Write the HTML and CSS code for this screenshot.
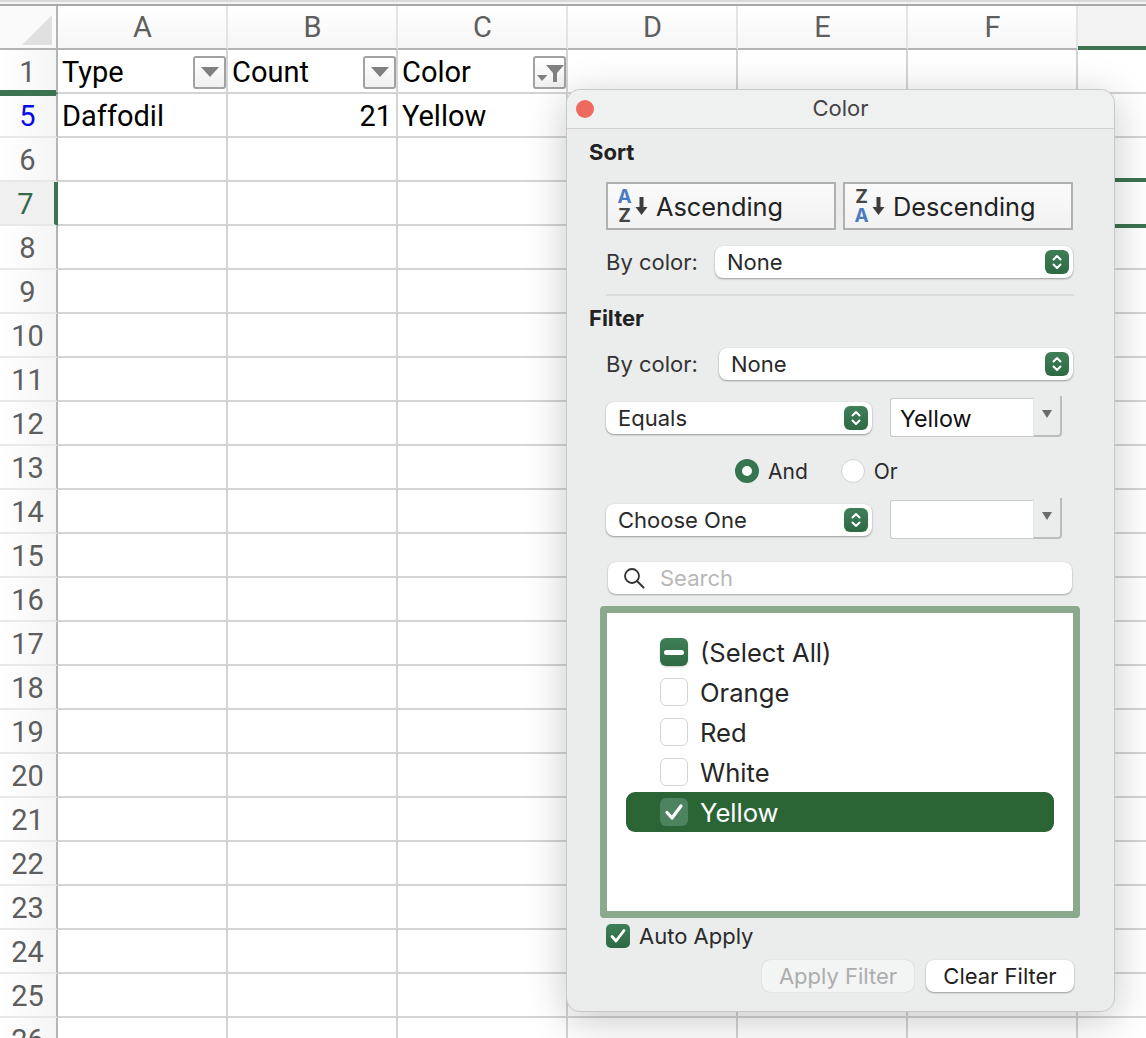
FILE: index.html
```html
<!DOCTYPE html>
<html lang="en">
<head>
<meta charset="utf-8">
<title>Color filter</title>
<link rel="stylesheet" href="styles.css">
</head>
<body>
<main class="sheet">
  <div class="topbar"></div>
  <div class="row colhead">
    <div class="rh corner"><svg width="30" height="30" viewBox="0 0 30 30"><polygon points="30,0 30,30 0,30" fill="#e0e0e0"/></svg></div>
    <div class="ch">A</div><div class="ch">B</div><div class="ch">C</div><div class="ch">D</div><div class="ch">E</div><div class="ch">F</div><div class="ch g">&nbsp;</div>
  </div>
  <div class="row">
    <div class="rh rh-first">1</div>
    <div class="c fc">Type<span class="fbtn"><svg width="18" height="10" viewBox="0 0 18 10"><polygon points="0,0 18,0 9,10" fill="#808080"/></svg></span></div>
    <div class="c fc">Count<span class="fbtn"><svg width="18" height="10" viewBox="0 0 18 10"><polygon points="0,0 18,0 9,10" fill="#808080"/></svg></span></div>
    <div class="c fc">Color<span class="fbtn"><svg width="29" height="29" viewBox="0 0 29 29"><polygon points="2,17 12.5,17 7,23" fill="#808080"/><path d="M11 7h18l-7 8v9h-4v-9z" fill="#808080"/></svg></span></div>
    <div class="c"></div><div class="c"></div><div class="c"></div><div class="c g"></div>
  </div>
  <div class="row">
    <div class="rh blue">5</div>
    <div class="c">Daffodil</div><div class="c num">21</div><div class="c">Yellow</div>
    <div class="c"></div><div class="c"></div><div class="c"></div><div class="c g"></div>
  </div>
  <div class="row"><div class="rh">6</div><div class="c"></div><div class="c"></div><div class="c"></div><div class="c"></div><div class="c"></div><div class="c"></div><div class="c g"></div></div>
  <div class="row"><div class="rh active">7</div><div class="c"></div><div class="c"></div><div class="c"></div><div class="c"></div><div class="c"></div><div class="c"></div><div class="c g selected"></div></div>
  <div class="row"><div class="rh">8</div><div class="c"></div><div class="c"></div><div class="c"></div><div class="c"></div><div class="c"></div><div class="c"></div><div class="c g"></div></div>
  <div class="row"><div class="rh">9</div><div class="c"></div><div class="c"></div><div class="c"></div><div class="c"></div><div class="c"></div><div class="c"></div><div class="c g"></div></div>
  <div class="row"><div class="rh">10</div><div class="c"></div><div class="c"></div><div class="c"></div><div class="c"></div><div class="c"></div><div class="c"></div><div class="c g"></div></div>
  <div class="row"><div class="rh">11</div><div class="c"></div><div class="c"></div><div class="c"></div><div class="c"></div><div class="c"></div><div class="c"></div><div class="c g"></div></div>
  <div class="row"><div class="rh">12</div><div class="c"></div><div class="c"></div><div class="c"></div><div class="c"></div><div class="c"></div><div class="c"></div><div class="c g"></div></div>
  <div class="row"><div class="rh">13</div><div class="c"></div><div class="c"></div><div class="c"></div><div class="c"></div><div class="c"></div><div class="c"></div><div class="c g"></div></div>
  <div class="row"><div class="rh">14</div><div class="c"></div><div class="c"></div><div class="c"></div><div class="c"></div><div class="c"></div><div class="c"></div><div class="c g"></div></div>
  <div class="row"><div class="rh">15</div><div class="c"></div><div class="c"></div><div class="c"></div><div class="c"></div><div class="c"></div><div class="c"></div><div class="c g"></div></div>
  <div class="row"><div class="rh">16</div><div class="c"></div><div class="c"></div><div class="c"></div><div class="c"></div><div class="c"></div><div class="c"></div><div class="c g"></div></div>
  <div class="row"><div class="rh">17</div><div class="c"></div><div class="c"></div><div class="c"></div><div class="c"></div><div class="c"></div><div class="c"></div><div class="c g"></div></div>
  <div class="row"><div class="rh">18</div><div class="c"></div><div class="c"></div><div class="c"></div><div class="c"></div><div class="c"></div><div class="c"></div><div class="c g"></div></div>
  <div class="row"><div class="rh">19</div><div class="c"></div><div class="c"></div><div class="c"></div><div class="c"></div><div class="c"></div><div class="c"></div><div class="c g"></div></div>
  <div class="row"><div class="rh">20</div><div class="c"></div><div class="c"></div><div class="c"></div><div class="c"></div><div class="c"></div><div class="c"></div><div class="c g"></div></div>
  <div class="row"><div class="rh">21</div><div class="c"></div><div class="c"></div><div class="c"></div><div class="c"></div><div class="c"></div><div class="c"></div><div class="c g"></div></div>
  <div class="row"><div class="rh">22</div><div class="c"></div><div class="c"></div><div class="c"></div><div class="c"></div><div class="c"></div><div class="c"></div><div class="c g"></div></div>
  <div class="row"><div class="rh">23</div><div class="c"></div><div class="c"></div><div class="c"></div><div class="c"></div><div class="c"></div><div class="c"></div><div class="c g"></div></div>
  <div class="row"><div class="rh">24</div><div class="c"></div><div class="c"></div><div class="c"></div><div class="c"></div><div class="c"></div><div class="c"></div><div class="c g"></div></div>
  <div class="row"><div class="rh">25</div><div class="c"></div><div class="c"></div><div class="c"></div><div class="c"></div><div class="c"></div><div class="c"></div><div class="c g"></div></div>
  <div class="row"><div class="rh">26</div><div class="c"></div><div class="c"></div><div class="c"></div><div class="c"></div><div class="c"></div><div class="c"></div><div class="c g"></div></div>
</main>

<section class="dialog">
  <header class="titlebar"><span class="close"></span><span class="title">Color</span></header>
  <div class="body">
    <h2 class="sect sect-sort">Sort</h2>
    <div class="sortrow">
      <button class="sortbtn"><span class="az"><b class="blue-l">A</b><b class="dark-l">Z</b></span><svg class="arrow" width="13" height="20" viewBox="0 0 12 20"><path d="M4 1h4v10h4l-6 8-6-8h4z" fill="#3c3c3c"/></svg>Ascending</button>
      <button class="sortbtn"><span class="az"><b class="dark-l">Z</b><b class="blue-l">A</b></span><svg class="arrow" width="13" height="20" viewBox="0 0 12 20"><path d="M4 1h4v10h4l-6 8-6-8h4z" fill="#3c3c3c"/></svg>Descending</button>
    </div>
    <div class="colorrow r-sortcolor">
      <span class="lbl">By color:</span>
      <div class="sel w358">None<span class="step"><svg width="12" height="18" viewBox="0 0 12 18"><path d="M2.5 6.5 6 3l3.5 3.5M2.5 11.5 6 15l3.5-3.5" fill="none" stroke="#fff" stroke-width="2" stroke-linecap="round" stroke-linejoin="round"/></svg></span></div>
    </div>
    <hr class="divider">
    <h2 class="sect sect-filter">Filter</h2>
    <div class="colorrow r-filtercolor">
      <span class="lbl">By color:</span>
      <div class="sel w354">None<span class="step"><svg width="12" height="18" viewBox="0 0 12 18"><path d="M2.5 6.5 6 3l3.5 3.5M2.5 11.5 6 15l3.5-3.5" fill="none" stroke="#fff" stroke-width="2" stroke-linecap="round" stroke-linejoin="round"/></svg></span></div>
    </div>
    <div class="critrow r-crit1">
      <div class="sel w266">Equals<span class="step"><svg width="12" height="18" viewBox="0 0 12 18"><path d="M2.5 6.5 6 3l3.5 3.5M2.5 11.5 6 15l3.5-3.5" fill="none" stroke="#fff" stroke-width="2" stroke-linecap="round" stroke-linejoin="round"/></svg></span></div>
      <div class="combo"><span class="combo-input">Yellow</span><span class="combo-arrow"><svg width="10" height="8" viewBox="0 0 10 8"><polygon points="0,0 10,0 5,8" fill="#6b6b6b"/></svg></span></div>
    </div>
    <div class="radios">
      <span class="radio on"></span><span class="rlbl">And</span>
      <span class="radio off"></span><span class="rlbl">Or</span>
    </div>
    <div class="critrow r-crit2">
      <div class="sel w266">Choose One<span class="step"><svg width="12" height="18" viewBox="0 0 12 18"><path d="M2.5 6.5 6 3l3.5 3.5M2.5 11.5 6 15l3.5-3.5" fill="none" stroke="#fff" stroke-width="2" stroke-linecap="round" stroke-linejoin="round"/></svg></span></div>
      <div class="combo"><span class="combo-input"></span><span class="combo-arrow"><svg width="10" height="8" viewBox="0 0 10 8"><polygon points="0,0 10,0 5,8" fill="#6b6b6b"/></svg></span></div>
    </div>
    <div class="search">
      <svg width="22" height="22" viewBox="0 0 22 22"><circle cx="9" cy="9" r="7" fill="none" stroke="#333" stroke-width="1.8"/><path d="M14 14l6.5 6.5" stroke="#333" stroke-width="2" stroke-linecap="round"/></svg>
      <span>Search</span>
    </div>
    <div class="list">
      <div class="item"><span class="cb cb-mixed"><i></i></span>(Select All)</div>
      <div class="item"><span class="cb"></span>Orange</div>
      <div class="item"><span class="cb"></span>Red</div>
      <div class="item"><span class="cb"></span>White</div>
      <div class="item item-sel"><span class="cb cb-sel"><svg width="22" height="20" viewBox="0 0 22 20"><path d="M4 10.5 9 16 18 4" fill="none" stroke="#fff" stroke-width="3.2" stroke-linecap="round" stroke-linejoin="round"/></svg></span>Yellow</div>
    </div>
    <div class="auto"><span class="cb-auto"><svg width="18" height="16" viewBox="0 0 18 16"><path d="M3 8.5 7 13l8-10.5" fill="none" stroke="#fff" stroke-width="2.8" stroke-linecap="round" stroke-linejoin="round"/></svg></span>Auto Apply</div>
    <div class="actions">
      <button class="act act-off">Apply Filter</button>
      <button class="act">Clear Filter</button>
    </div>
  </div>
</section>
</body>
</html>
```

FILE: styles.css
```css
* { box-sizing: border-box; }
html, body { margin: 0; height: 100%; overflow: hidden; background: #fff; }
body { font-family: "Roboto", "Liberation Sans", sans-serif; }

/* sheet */
.sheet { display: flex; flex-direction: column; width: 1146px; height: 1038px; overflow: hidden; }
.topbar { flex: 0 0 6px; border-top: 2px solid #d8d8d8; border-bottom: 2px solid #a8a8a8; background: #f4f4f4; }
.row { display: flex; flex: 0 0 44px; height: 44px; }
.colhead { flex: 0 0 44px; height: 44px; }
.rh { flex: 0 0 58px; display: flex; align-items: center; justify-content: center; padding: 2px 1px 0 0;
  font-size: 29px; color: #5e5e5e; background: linear-gradient(90deg, #fff, #f5f5f5);
  border-right: 2px solid #b4b4b4; border-bottom: 2px solid #e8e8e8; }
.corner { align-items: flex-end; justify-content: flex-end; padding: 0 4px 3px 0; border-bottom: 2px solid #b4b4b4; background: #fafafa; }
.corner svg { display: block; }
.rh-first { border-bottom-color: #3c7350; box-shadow: inset 0 -2px 0 #3c7350; }
.blue { color: #0a0ae6; box-shadow: inset 0 2px 0 #3c7350; }
.active { color: #33694a; background: #f0f0f0; border-right: 4px solid #3c7350; padding-right: 3px; }
.ch { flex: 0 0 170px; display: flex; align-items: center; justify-content: center; padding-left: 1px; font-size: 29px; color: #5e5e5e;
  background: linear-gradient(#fff, #f6f6f6); border-right: 2px solid #e4e4e4; border-bottom: 2px solid #b4b4b4; }
.ch.g { flex: 1 1 auto; background: #f3f3f3; border-right: 0; border-bottom: 4px solid #3c7350; }
.c { flex: 0 0 170px; display: flex; align-items: center; padding: 2px 4px 0; font-size: 29px; color: #000;
  border-right: 2px solid #d4d4d4; border-bottom: 2px solid #d4d4d4; white-space: nowrap; }
.c.g { flex: 1 1 auto; border-right: 0; }
.c.num { justify-content: flex-end; }
.c.fc { justify-content: space-between; padding: 2px 0 0 4px; }
.c.selected { border-bottom: 2px solid #3c7350; box-shadow: 0 -4px 0 #3c7350, 0 2px 0 #3c7350; }
.fbtn { display: flex; align-items: center; justify-content: center; width: 33px; height: 33px; border: 2px solid #a2a2a2;
  border-radius: 3px; background: linear-gradient(#fff, #f0f0f0); }

/* dialog */
.dialog { position: absolute; left: 566px; top: 89px; width: 549px; height: 923px; background: #ebeded; border: 1px solid #c8c8c8;
  border-radius: 14px; box-shadow: 0 8px 40px rgba(0, 0, 0, .22); font-family: "Inter", "Liberation Sans", sans-serif; color: #222; font-size: 22px; }
.titlebar { display: flex; align-items: center; justify-content: center; position: relative; height: 39px; padding-bottom: 2px; background: #eff0f0;
  border-bottom: 1px solid #cfcfcf; border-radius: 14px 14px 0 0; }
.title { font-size: 22px; color: #444; }
.close { position: absolute; left: 9px; top: 10px; width: 18px; height: 18px; border-radius: 50%; background: #ee6a5f; }
.body { padding-left: 39px; }
.sect { margin: 0 0 0 -17px; height: 24px; line-height: 24px; font-size: 22px; font-weight: 700; color: #222; }
.sect-sort { margin-top: 11px; }
.sect-filter { margin-top: 10px; }
.sortrow { display: flex; gap: 7px; margin-top: 18px; }
.sortbtn { display: flex; align-items: center; width: 230px; height: 48px; padding: 0 0 0 8px; border: 2px solid #b0b0b0; border-radius: 0;
  background: linear-gradient(#fafafa, #f2f2f2); font: inherit; font-size: 25.3px; color: #222; }
.az { display: flex; flex-direction: column; align-items: center; width: 17px; font-size: 19px; line-height: 19px; }
.az b { display: block; height: 19px; }
.blue-l { color: #4a7cc0; }
.dark-l { color: #444; }
.arrow { margin: 0 8px 0 2px; }
.colorrow { display: flex; justify-content: space-between; align-items: center; width: 467px; }
.r-sortcolor { margin-top: 16px; }
.r-filtercolor { margin-top: 18px; }
.lbl { color: #333; }
.sel { display: flex; align-items: center; justify-content: space-between; height: 32px; padding: 0 4px 0 12px; background: #fff;
  border-radius: 8px; box-shadow: 0 1px 2px rgba(0, 0, 0, .35), 0 0 1px rgba(0, 0, 0, .15); color: #2a2a2a; }
.w358 { width: 358px; }
.w354 { width: 354px; }
.w266 { width: 266px; margin-bottom: 3px; }
.step { display: flex; align-items: center; justify-content: center; width: 24px; height: 24px; border-radius: 6px; background: linear-gradient(#3f7f57, #2d6a43); }
.divider { width: 468px; height: 2px; margin: 16px 0 0; border: 0; background: #dcdcdc; }
.critrow { display: flex; align-items: flex-end; justify-content: space-between; width: 456px; }
.r-crit1 { margin-top: 16px; }
.r-crit2 { margin-top: 15px; }
.combo { display: flex; align-items: flex-end; width: 172px; height: 41px; }
.combo-input { display: flex; align-items: center; width: 143px; height: 39px; padding: 2px 0 0 9px; background: #fff; border: 1px solid #cacaca;
  border-right: 0; border-radius: 3px 0 0 3px; color: #111; font-size: 23.3px; }
.combo-arrow { display: flex; justify-content: center; align-items: flex-start; padding-top: 14px; width: 29px; height: 41px;
  border-right: 2px solid #bdbdbd; border-bottom: 2px solid #bdbdbd; border-left: 1px solid #e4e5e5; border-radius: 0 0 4px 0; }
.radios { display: flex; align-items: center; height: 24px; margin-top: 22px; padding-left: 129px; font-size: 21px; }
.radio { width: 24px; height: 24px; border-radius: 50%; }
.radio.on { background: #fff; border: 7px solid #357550; }
.radio.off { background: #fff; border: 1px solid #d0d0d0; margin-left: 33px; }
.rlbl { margin-left: 9px; color: #2a2a2a; }
.search { display: flex; align-items: center; width: 464px; height: 32px; margin: 23px 0 0 2px; padding-left: 15px; background: #fff; border-radius: 8px;
  box-shadow: 0 1px 2px rgba(0, 0, 0, .3), 0 0 1px rgba(0, 0, 0, .15); color: #b8b8b8; }
.search span { margin-left: 15px; }
.list { width: 480px; height: 312px; margin: 12px 0 0 -6px; padding: 19px 19px 0; background: #fff; border: 7px solid #8aa98d; border-radius: 4px; }
.item { display: flex; align-items: center; height: 40px; padding: 0 0 0 34px; font-size: 25.6px; color: #262626; }
.item-sel { background: #2b6535; color: #fff; border-radius: 9px; }
.cb { display: flex; align-items: center; justify-content: center; width: 28px; height: 28px; margin: 0 12px 0 0; background: #fff; border: 1px solid #d4d4d4; border-radius: 6px; }
.cb-mixed { background: linear-gradient(#3f7f57, #2d6a43); border: 0; box-shadow: 0 1px 2px rgba(0, 0, 0, .2); }
.cb-mixed i { display: block; width: 20px; height: 5px; border-radius: 3px; background: #fff; }
.cb-sel { background: #4e8360; border: 0; }
.auto { display: flex; align-items: center; height: 24px; margin-top: 6px; color: #2a2a2a; }
.cb-auto { display: flex; align-items: center; justify-content: center; width: 24px; height: 24px; margin-right: 9px; border-radius: 5px; background: linear-gradient(#3f7f57, #2d6a43); }
.actions { display: flex; justify-content: flex-end; gap: 12px; width: 468px; margin-top: 12px; }
.act { height: 32px; width: 148px; padding: 0; border: 0; border-radius: 8px; background: #fff; box-shadow: 0 1px 2px rgba(0, 0, 0, .35), 0 0 1px rgba(0, 0, 0, .15); font: inherit; color: #222; }
.act-off { width: 152px; background: #f3f4f4; color: #adadad; box-shadow: 0 0 1px rgba(0, 0, 0, .25); }
```
